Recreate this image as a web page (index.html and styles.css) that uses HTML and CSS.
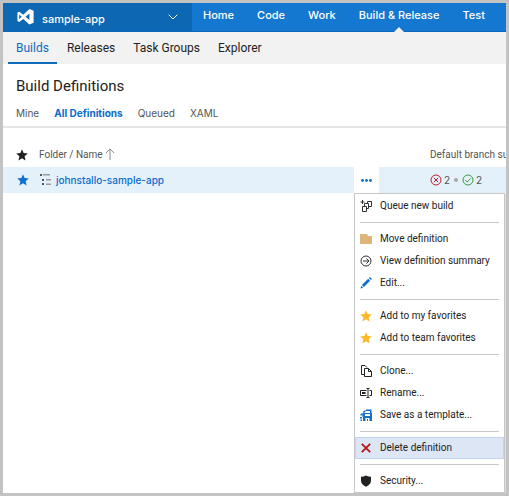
FILE: index.html
```
<!DOCTYPE html>
<html lang="en">
<head>
<meta charset="utf-8">
<meta name="viewport" content="width=device-width, initial-scale=1">
<title>Build Definitions</title>
<link rel="stylesheet" href="styles.css">
</head>
<body>
<svg class="sprite" aria-hidden="true">
  <symbol id="star" viewBox="0 0 12 12"><path d="M6 .3 7.6 4.1 11.8 4.5 8.6 7.2 9.6 11.5 6 9.2 2.4 11.5 3.4 7.2 .2 4.5 4.4 4.1z"/></symbol>
</svg>
<div class="app">
  <header class="topbar">
    <button class="project" type="button">
      <svg class="logo" viewBox="0 0 17 16" aria-hidden="true"><path fill="#fff" fill-rule="evenodd" d="M12.4 0 16.6 1.8V13.8L12.4 15.6 6.2 9.9 2.2 12.9.4 12V3.6L2.2 2.8 6.2 5.7zM12.4 4.6 8.5 7.8 12.4 11zM2.2 5.4V10.2L4.6 7.8z"/></svg>
      <span class="project-name">sample-app</span>
      <svg class="chevron" viewBox="0 0 10 6" aria-hidden="true"><path d="M.7.7 5 5 9.3.7" fill="none" stroke="#fff"/></svg>
    </button>
    <nav class="hubs" aria-label="Hubs">
      <a href="#">Home</a>
      <a href="#">Code</a>
      <a href="#">Work</a>
      <a href="#" class="current" aria-current="page">Build &amp; Release</a>
      <a href="#">Test</a>
    </nav>
  </header>
  <nav class="subnav" aria-label="Build and Release">
    <a href="#" class="current">Builds</a>
    <a href="#">Releases</a>
    <a href="#">Task Groups</a>
    <a href="#">Explorer</a>
  </nav>
  <main>
    <h1>Build Definitions</h1>
    <nav class="views" aria-label="Views">
      <a href="#">Mine</a>
      <a href="#" class="current">All Definitions</a>
      <a href="#">Queued</a>
      <a href="#">XAML</a>
    </nav>
    <table class="definitions">
      <thead>
        <tr>
          <th class="fav"><svg class="star" aria-label="Favorite"><use href="#star"/></svg></th>
          <th class="name">Folder / Name <svg class="sort" viewBox="0 0 10 12" aria-hidden="true"><path d="M5 12V1M.7 5.2 5 .9 9.3 5.2" fill="none" stroke="#8a8a8a"/></svg></th>
          <th class="more"></th>
          <th class="status">Default branch su</th>
        </tr>
      </thead>
      <tbody>
        <tr>
          <td class="fav"><svg class="star on" aria-label="Favorite"><use href="#star"/></svg></td>
          <td class="name"><a href="#"><svg class="tree" viewBox="0 0 12 12" aria-hidden="true"><path fill="#555" d="M1 0H3V2H1zM3 5H5V7H3zM3 9H5V11H3z"/><path fill="#999" d="M4 0H11V1.500H4zM7 5H12V6.500H7zM7 9.500H12V11H7z"/></svg>johnstallo-sample-app</a></td>
          <td class="more">
            <button class="more-button" type="button" aria-label="More actions" aria-expanded="true"><svg viewBox="0 0 11 3" aria-hidden="true"><g fill="#0a6ccc"><circle cx="1.5" cy="1.5" r="1.4"/><circle cx="5.5" cy="1.5" r="1.4"/><circle cx="9.5" cy="1.5" r="1.4"/></g></svg></button>
            <div class="menu" role="menu">
              <button type="button" role="menuitem"><svg viewBox="0 0 12 12"><g fill="none" stroke="#333"><path d="M2.5 0V4M.5 2H4.5M7.5 3.500V1.500H11.500V6.500H8.500M4.500 6V3.500H8.500V8.500H6.500M2.500 6.500H6.500V11.500H2.500z"/></g></svg>Queue new build</button>
              <hr>
              <button type="button" role="menuitem"><svg viewBox="0 0 12 12"><path fill="#dcb67a" d="M0 1H7L8 3H12V11H0z"/></svg>Move definition</button>
              <button type="button" role="menuitem"><svg viewBox="0 0 12 12"><g fill="none" stroke="#333"><circle cx="6" cy="6" r="5"/><path d="M3 6H9M6.5 3.5 9 6 6.5 8.5"/></g></svg>View definition summary</button>
              <button type="button" role="menuitem"><svg viewBox="0 0 12 12"><path fill="#0f6fd0" d="M.5 11.5 1.2 8.8 3.2 10.8zM1.9 8.1 8.2 1.8 10.2 3.8 3.9 10.1zM8.9 1.1 9.9.1 11.9 2.1 10.9 3.1z"/></svg>Edit...</button>
              <hr>
              <button type="button" role="menuitem"><svg class="gold"><use href="#star"/></svg>Add to my favorites</button>
              <button type="button" role="menuitem"><svg class="gold"><use href="#star"/></svg>Add to team favorites</button>
              <hr>
              <button type="button" role="menuitem"><svg viewBox="0 0 12 12"><g fill="none" stroke="#222"><path d="M4 9.5H1.5V.5H5L7 2.5"/><path d="M4.5 3.5H8.5L11.5 6.5V11.5H4.5zM8.5 3.5V6.5H11.5"/></g></svg>Clone...</button>
              <button type="button" role="menuitem"><svg viewBox="0 0 12 12"><g fill="none" stroke="#222"><path d="M6.5 3.5H.5V8.5H6.5M2 5.5H5.5M2 6.5H5.5M6.5 1.5H9.5M6.5 10.5H9.5M8 1.5V10.5M9.5 3.5H11.5V8.5H9.5"/></g></svg>Rename...</button>
              <button type="button" role="menuitem"><svg viewBox="0 0 12 12"><path fill="#1570cc" fill-rule="evenodd" d="M2.500 4H12V12H3V8H2.500zM5 5V7H10V5zM5.500 9V12H7V10H8V12H9.500V9z"/><path fill="#1570cc" d="M3 2.500 5.500 1V3L3.500 4zM6 .500H11.500V4H10V2H6zM.500 5 2.500 4V6.500H.500zM0 8H2V9.500H0zM.500 10.500H2V12H.500z"/></svg>Save as a template...</button>
              <hr>
              <button type="button" role="menuitem" class="active"><svg viewBox="0 0 12 12"><path d="M1.8 1.8 10.2 10.2M10.2 1.8 1.8 10.2" fill="none" stroke="#b8141a" stroke-width="1.8"/></svg>Delete definition</button>
              <hr>
              <button type="button" role="menuitem"><svg viewBox="0 0 12 12"><path fill="#222" d="M6 .5Q8.5 1.8 11 1.8V5.5Q11 9.5 6 11.8 1 9.5 1 5.5V1.8Q3.5 1.8 6 .5z"/></svg>Security...</button>
            </div>
          </td>
          <td class="status">
            <span class="counts">
              <svg class="result" viewBox="0 0 12 12" aria-label="Failed"><g fill="none" stroke="#bd1e2d"><circle cx="6" cy="6" r="5"/><path d="M3.8 3.8 8.2 8.2M8.2 3.8 3.8 8.2"/></g></svg><span>2</span>
              <i class="dot"></i>
              <svg class="result" viewBox="0 0 12 12" aria-label="Succeeded"><g fill="none" stroke="#3a9e3a"><circle cx="6" cy="6" r="5"/><path d="M3.3 6.2 5.2 8 8.7 4.3"/></g></svg><span>2</span>
            </span>
          </td>
        </tr>
      </tbody>
    </table>
  </main>
</div>
</body>
</html>
```
FILE: styles.css
```
* {
  box-sizing: border-box;
}

body {
  margin: 0;
  font: 10px/16px Inter, "Liberation Sans", sans-serif;
  color: #222;
}

a {
  color: inherit;
  text-decoration: none;
}

button {
  border: 0;
  padding: 0;
  background: none;
  font: inherit;
  color: inherit;
  text-align: left;
}

svg {
  display: block;
  flex: none;
}

.sprite {
  position: absolute;
  width: 0;
  height: 0;
}

.app {
  min-height: 100vh;
  border: 3px solid #c3c3c3;
  background: #fff;
  overflow: hidden;
}

.topbar {
  display: flex;
  height: 29px;
  background: #1478d0;
  border-bottom: 1px solid #0c68ba;
  color: #fff;
  font-size: 11px;
}

.project {
  display: flex;
  align-items: center;
  gap: 8px;
  flex: none;
  width: 189px;
  padding: 0 14px;
  background: #0e67b3;
}

.logo {
  width: 17px;
  height: 16px;
}

.project-name {
  flex: 1;
  padding-top: 4px;
  font-size: 11px;
  font-weight: 500;
}

.chevron {
  width: 10px;
  height: 6px;
}

.hubs {
  display: flex;
  gap: 23px;
  padding-left: 11px;
  font-weight: 500;
  line-height: 25px;
  white-space: nowrap;
}

.hubs .current {
  position: relative;
}

.hubs .current::after {
  content: "";
  position: absolute;
  left: 50%;
  top: 24px;
  margin-left: -5px;
  border: 5px solid transparent;
  border-top: 0;
  border-bottom-color: #f2f2f2;
}

.subnav {
  display: flex;
  gap: 2px;
  padding-left: 5px;
  background: #f2f2f2;
  font-family: Roboto, sans-serif;
  font-size: 12px;
  line-height: 28px;
}

.subnav a {
  padding: 2px 8px 0;
  border-bottom: 2px solid transparent;
}

.subnav .current {
  color: #0f6cbd;
  border-color: #0f6cbd;
}

h1 {
  margin: 0;
  padding: 12px 13px 0;
  font-family: Roboto, sans-serif;
  font-size: 15px;
  font-weight: 400;
  line-height: 20px;
}

.views {
  display: flex;
  gap: 15px;
  padding: 9px 13px 5px;
  border-bottom: 2px solid #e6e6e6;
  color: #555;
}

.views .current {
  color: #0a6ccc;
  font-weight: 700;
}

.definitions {
  width: 100%;
  margin-top: 15px;
  table-layout: fixed;
  border-collapse: collapse;
}

th,
td {
  padding: 0;
  text-align: left;
  vertical-align: middle;
  white-space: nowrap;
}

th {
  height: 24px;
  color: #555;
  font-family: Roboto, sans-serif;
  font-weight: 400;
}

tbody td {
  height: 26px;
  background: #e5f1fa;
}

.definitions .fav {
  width: 36px;
  padding-left: 13px;
}

.definitions .more {
  position: relative;
  width: 25px;
}

.definitions .status {
  width: 127px;
  padding-left: 51px;
}

.star {
  width: 12px;
  height: 12px;
  fill: #222;
}

.on {
  margin-left: 1px;
  fill: #0f70d0;
}

.sort {
  display: inline-block;
  width: 10px;
  height: 12px;
  vertical-align: -2px;
}

.name a {
  display: flex;
  align-items: center;
  gap: 5px;
  color: #0a6ccc;
  font-weight: 500;
}

.tree {
  width: 12px;
  height: 12px;
}

.more-button {
  display: flex;
  align-items: center;
  justify-content: center;
  width: 100%;
  height: 26px;
  background: #fff;
}

.more-button svg {
  width: 11px;
  height: 3px;
}

.counts {
  display: flex;
  align-items: center;
  gap: 2px;
  color: #555;
}

.result {
  width: 12px;
  height: 12px;
}

.dot {
  width: 4px;
  height: 4px;
  margin: 0 2px;
  border-radius: 50%;
  background: #a3a8ad;
}

.menu {
  position: absolute;
  z-index: 1;
  top: 100%;
  left: 0;
  width: 151px;
  padding-top: 1px;
  border: 1px solid #c8c8c8;
  background: #fff;
  box-shadow: 1px 1px 2px #0003;
  font-family: Roboto, sans-serif;
}

.menu button {
  display: flex;
  align-items: center;
  gap: 8px;
  width: 100%;
  height: 22px;
  padding: 0 5px;
}

.menu button svg {
  width: 12px;
  height: 12px;
}

.menu .active {
  background: #dce6f5;
  outline: 1px solid #c2d5ef;
  outline-offset: -1px;
}

.menu .gold {
  fill: #fdb827;
}

.menu hr {
  margin: 5px;
  border: 0;
  border-top: 1px solid #c8c8c8;
}
```
